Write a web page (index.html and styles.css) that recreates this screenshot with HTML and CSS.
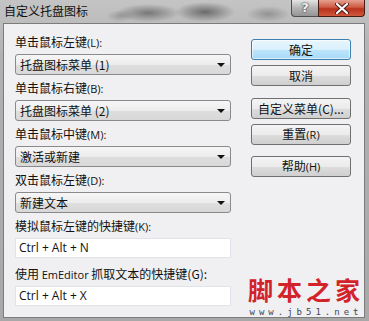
FILE: index.html
```html
<!DOCTYPE html>
<html lang="zh-CN">
<head>
    <meta charset="UTF-8">
    <title>自定义托盘图标</title>
    <link rel="stylesheet" href="styles.css">
</head>
<body>
    <div class="window">
        <div class="titlebar">
            <span class="title">自定义托盘图标</span>
            <div class="caption">
                <span class="cap-help">?</span>
                <span class="cap-close">
                    <svg width="14" height="11" viewBox="0 0 14 11">
                        <path d="M2 1 L12 10 M12 1 L2 10" stroke="#4a1a12" stroke-width="4" stroke-linecap="round"/>
                        <path d="M2 1 L12 10 M12 1 L2 10" stroke="#fff" stroke-width="2.2" stroke-linecap="round"/>
                    </svg>
                </span>
            </div>
        </div>
        <div class="client">
            <div class="fields">
                <div class="field">
                    <label>单击鼠标左键<span class="key">(L):</span></label>
                    <div class="combo"><span>托盘图标菜单 (1)</span><i class="arrow"></i></div>
                </div>
                <div class="field">
                    <label>单击鼠标右键<span class="key">(B):</span></label>
                    <div class="combo"><span>托盘图标菜单 (2)</span><i class="arrow"></i></div>
                </div>
                <div class="field">
                    <label>单击鼠标中键<span class="key">(M):</span></label>
                    <div class="combo"><span>激活或新建</span><i class="arrow"></i></div>
                </div>
                <div class="field">
                    <label>双击鼠标左键<span class="key">(D):</span></label>
                    <div class="combo"><span>新建文本</span><i class="arrow"></i></div>
                </div>
                <div class="field">
                    <label>模拟鼠标左键的快捷键<span class="key">(K):</span></label>
                    <div class="hotkey">Ctrl + Alt + N</div>
                </div>
                <div class="field last">
                    <label>使用 <span class="key">EmEditor</span> 抓取文本的快捷键(G):</label>
                    <div class="hotkey">Ctrl + Alt + X</div>
                </div>
            </div>
            <div class="buttons">
                <button class="btn default">确定</button>
                <button class="btn">取消</button>
                <button class="btn group">自定义菜单(C)...</button>
                <button class="btn">重置<span class="key">(R)</span></button>
                <button class="btn group-sm">帮助<span class="key">(H)</span></button>
            </div>
            <div class="watermark">
                <div class="wm-cn">脚本之家</div>
                <div class="wm-url">www.jb51.net</div>
            </div>
        </div>
    </div>
</body>
</html>
```

FILE: styles.css
```css
body {
    margin: 0;
    width: 369px;
    height: 321px;
    overflow: hidden;
    font-family: "Noto Sans CJK SC", "Noto Sans", sans-serif;
    font-size: 12px;
    color: #111;
}
.window {
    width: 369px;
    height: 321px;
    display: flex;
    flex-direction: column;
    background:
        radial-gradient(ellipse 32px 9px at 148px 13px, rgba(60, 60, 60, 0.55), transparent),
        radial-gradient(ellipse 30px 10px at 205px 12px, rgba(50, 50, 50, 0.6), transparent),
        radial-gradient(ellipse 22px 8px at 268px 14px, rgba(80, 80, 80, 0.4), transparent),
        radial-gradient(ellipse 14px 6px at 120px 16px, rgba(90, 90, 90, 0.35), transparent),
        linear-gradient(#c4c4c4, #b0b0b0 60px, #a8a8a8);
}
.titlebar {
    height: 23px;
    display: flex;
    justify-content: space-between;
    align-items: flex-start;
    padding: 0 4px 0 4px;
}
.title {
    line-height: 22px;
    color: #111;
}
.caption {
    display: flex;
    height: 17px;
}
.cap-help {
    width: 27px;
    height: 17px;
    box-sizing: border-box;
    border: 1px solid #4e4e4e;
    border-top: none;
    border-right: none;
    border-radius: 0 0 0 4px;
    background: linear-gradient(rgba(255, 255, 255, 0.55), rgba(170, 170, 170, 0.6) 50%, rgba(120, 120, 120, 0.6));
    color: #f4f4f4;
    font-family: "DejaVu Sans", sans-serif;
    font-weight: bold;
    font-size: 13px;
    line-height: 15px;
    text-align: center;
    text-shadow: 0 0 2px #333, 0 0 1px #333;
}
.cap-close {
    width: 47px;
    height: 17px;
    box-sizing: border-box;
    border: 1px solid #4a1c14;
    border-top: none;
    border-radius: 0 0 4px 0;
    background: linear-gradient(#e5a090, #cf5a44 45%, #b8321c 55%, #d0583c);
    display: flex;
    align-items: center;
    justify-content: center;
}
.client {
    flex: 1;
    margin: 0 4px 3px 3px;
    border: 1px solid #7c7c7c;
    background: #f0f0f2;
    display: flex;
    padding: 10px 0 0 11px;
    position: relative;
}
.fields {
    width: 216px;
}
.field + .field {
    margin-top: 5px;
}
.field.last {
    margin-top: 8px;
}
.field label {
    display: block;
    height: 16px;
    line-height: 16px;
    margin-bottom: 4px;
}
.key {
    font-family: "Open Sans", sans-serif;
    font-size: 11px;
}
.combo {
    height: 21px;
    box-sizing: border-box;
    border: 1px solid #8a8a8a;
    border-radius: 3px;
    background: linear-gradient(#f6f6f6, #ececec 50%, #dedede 51%, #d8d8d8);
    display: flex;
    align-items: center;
    justify-content: space-between;
    padding: 0 5px 0 4px;
    line-height: 19px;
}
.arrow {
    width: 0;
    height: 0;
    border-left: 4px solid transparent;
    border-right: 4px solid transparent;
    border-top: 4px solid #111;
    margin-top: 1px;
}
.hotkey {
    height: 20px;
    box-sizing: border-box;
    border: 1px solid #e2e3ea;
    background: #fff;
    padding: 0 3px;
    line-height: 18px;
    font-family: "Open Sans", sans-serif;
    font-size: 12px;
}
.buttons {
    display: flex;
    flex-direction: column;
    margin-left: 20px;
    padding-top: 5px;
}
.btn {
    width: 100px;
    height: 21px;
    box-sizing: border-box;
    border: 1px solid #707070;
    border-radius: 3px;
    background: linear-gradient(#f4f4f4, #ebebeb 50%, #dddddd 51%, #cfcfcf);
    font-family: "Noto Sans CJK SC", sans-serif;
    font-size: 12px;
    color: #111;
    padding: 0;
    line-height: 18px;
    margin-top: 5px;
}
.btn:first-child {
    margin-top: 0;
}
.btn.default {
    border-color: #3c7fb1;
    background: linear-gradient(#eaf6fd, #d9f0fc 50%, #bee6fd 51%, #a7d9f5);
    box-shadow: inset 0 0 0 1px rgba(255, 255, 255, 0.6);
}
.btn.group {
    margin-top: 12px;
}
.btn.group-sm {
    margin-top: 11px;
}
.watermark {
    position: absolute;
    left: 242px;
    top: 251px;
    width: 116px;
    text-align: center;
}
.wm-cn {
    color: #d3232a;
    font-size: 25px;
    font-weight: bold;
    letter-spacing: 4px;
    line-height: 28px;
    margin-right: -4px;
}
.wm-url {
    color: #3c4658;
    font-family: "DejaVu Sans Mono", monospace;
    font-size: 9px;
    letter-spacing: 4px;
    line-height: 10px;
    margin-top: 4px;
    margin-right: -4px;
}
```
